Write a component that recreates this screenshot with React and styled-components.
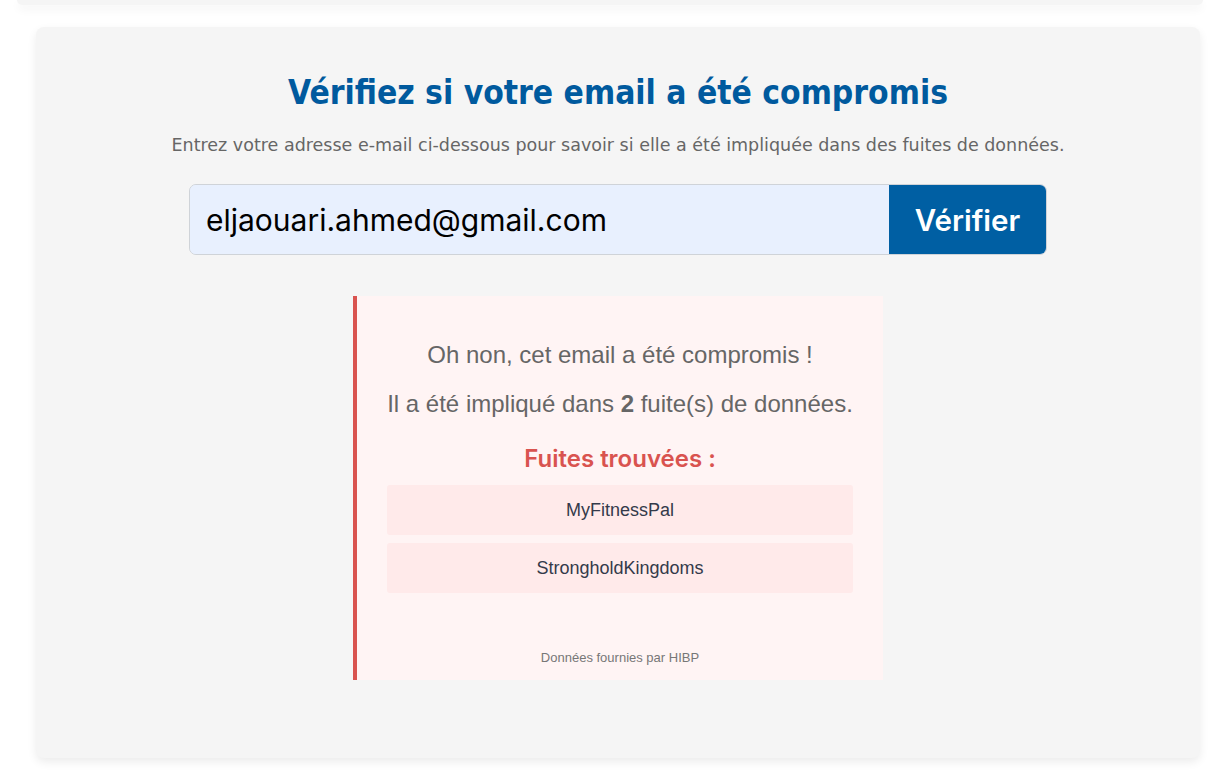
import React from "react";
import styled, { createGlobalStyle } from "styled-components";

const GlobalStyle = createGlobalStyle`
  * { box-sizing: border-box; }
  body {
    margin: 0;
    background: #ffffff;
    font-family: "Liberation Sans", Arial, sans-serif;
  }
`;

const breaches = ["MyFitnessPal", "StrongholdKingdoms"];

const App = () => {
  return (
    <>
      <GlobalStyle />
      <Page>
        <PrevCard />
        <Card>
          <Title>Vérifiez si votre email a été compromis</Title>
          <Subtitle>
            Entrez votre adresse e-mail ci-dessous pour savoir si elle a été
            impliquée dans des fuites de données.
          </Subtitle>
          <Form onSubmit={(e) => e.preventDefault()}>
            <EmailInput type="email" defaultValue="eljaouari.ahmed@gmail.com" />
            <SubmitButton type="submit">Vérifier</SubmitButton>
          </Form>
          <Result>
            <ResultText>Oh non, cet email a été compromis !</ResultText>
            <ResultText>
              Il a été impliqué dans <strong>2</strong> fuite(s) de données.
            </ResultText>
            <BreachTitle>Fuites trouvées :</BreachTitle>
            <BreachList>
              {breaches.map((b) => (
                <BreachItem key={b}>{b}</BreachItem>
              ))}
            </BreachList>
            <Credit>Données fournies par HIBP</Credit>
          </Result>
        </Card>
      </Page>
    </>
  );
};

const Page = styled.div`
  width: 1220px;
  height: 774px;
  overflow: hidden;
  display: flex;
  flex-direction: column;
  align-items: center;
`;

const PrevCard = styled.div`
  width: 1186px;
  height: 5px;
  background: #f5f5f5;
  border-radius: 0 0 8px 8px;
  box-shadow: 0 4px 10px rgba(0, 0, 0, 0.06);
`;

const Card = styled.div`
  margin-top: 22px;
  margin-left: 16px;
  width: 1164px;
  height: 731px;
  background: #f5f5f5;
  border-radius: 8px;
  box-shadow: 0 4px 10px rgba(0, 0, 0, 0.08);
  padding-top: 44px;
  display: flex;
  flex-direction: column;
  align-items: center;
`;

const Title = styled.h1`
  margin: 0;
  font-family: "DejaVu Sans Condensed", "DejaVu Sans", sans-serif;
  font-weight: bold;
  font-size: 33.3px;
  line-height: 44px;
  color: #005a9e;
`;

const Subtitle = styled.p`
  margin: 18px 0 0;
  font-family: "DejaVu Sans", sans-serif;
  font-size: 17.5px;
  line-height: 24px;
  color: #666666;
`;

const Form = styled.form`
  margin-top: 27px;
  width: 858px;
  height: 71px;
  display: flex;
  border: 1px solid #cfd3d8;
  border-radius: 7px;
  overflow: hidden;
  background: #e8f0fe;
`;

const EmailInput = styled.input`
  flex: 1;
  border: none;
  outline: none;
  background: #e8f0fe;
  padding: 0 16px;
  font-family: Inter, sans-serif;
  font-size: 30px;
  color: #000;
`;

const SubmitButton = styled.button`
  width: 157px;
  border: none;
  background: #005fa3;
  color: #ffffff;
  font-family: Inter, sans-serif;
  font-weight: 600;
  font-size: 29.5px;
  cursor: pointer;
`;

const Result = styled.div`
  margin-top: 41px;
  width: 530px;
  background: #fff4f4;
  border-left: 4px solid #d9534f;
  padding: 45px 30px 14px;
  display: flex;
  flex-direction: column;
  align-items: center;
`;

const ResultText = styled.p`
  margin: 0 0 21px;
  font-size: 24px;
  line-height: 28px;
  color: #666666;
`;

const BreachTitle = styled.h3`
  margin: 5px 0 11px;
  font-family: Inter, sans-serif;
  font-weight: 600;
  font-size: 24px;
  line-height: 30px;
  color: #d9534f;
`;

const BreachList = styled.ul`
  list-style: none;
  margin: 0;
  padding: 0;
  width: 100%;
  display: flex;
  flex-direction: column;
  gap: 8px;
`;

const BreachItem = styled.li`
  height: 50px;
  display: flex;
  align-items: center;
  justify-content: center;
  background: #ffeaea;
  border-radius: 3px;
  font-size: 18px;
  color: #343a4a;
`;

const Credit = styled.p`
  margin: 57px 0 0;
  font-size: 13px;
  line-height: 16px;
  color: #777777;
`;

export default App;
